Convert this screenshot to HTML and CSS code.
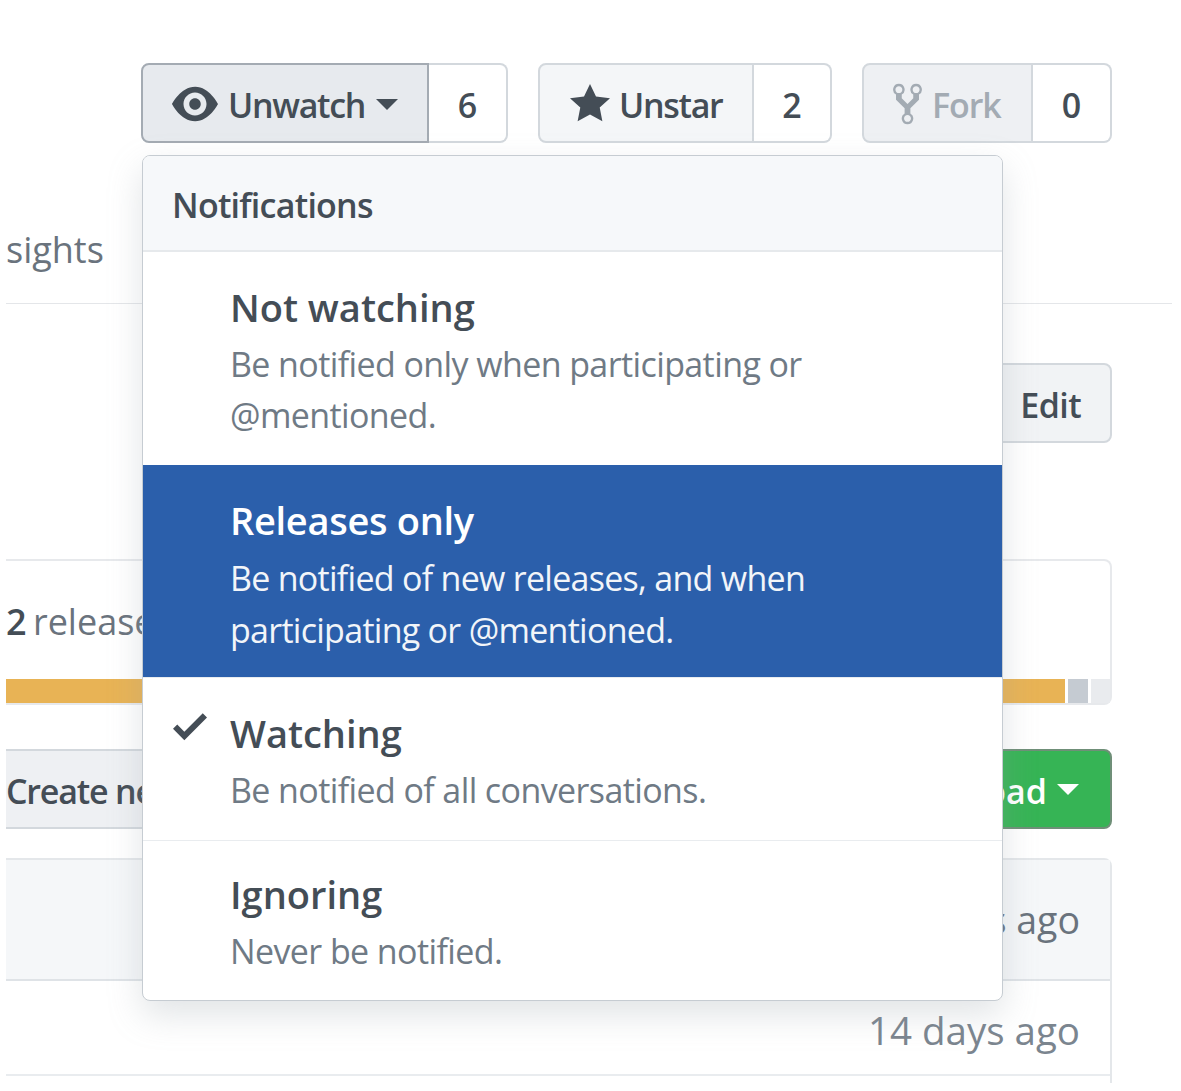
FILE: index.html
```html
<!DOCTYPE html>
<html lang="en">
<head>
    <meta charset="UTF-8">
    <meta name="viewport" content="width=device-width, initial-scale=1.0">
    <title>Notifications menu</title>
    <link rel="stylesheet" href="styles.css">
</head>
<body>
    <div class="page">
        <div class="actions">
            <div class="btn-group watch-group">
                <div class="btn btn-active">
                    <svg class="icon-eye" viewBox="0 0 16 16"><path fill-rule="evenodd" d="M8.06 2C3 2 0 8 0 8s3 6 8.06 6C13 14 16 8 16 8s-3-6-7.94-6zM8 12c-2.2 0-4-1.78-4-4 0-2.2 1.8-4 4-4 2.22 0 4 1.8 4 4 0 2.22-1.78 4-4 4zm2-4c0 1.11-.89 2-2 2-1.11 0-2-.89-2-2 0-1.11.89-2 2-2 1.11 0 2 .89 2 2z"/></svg>
                    <span>Unwatch</span>
                    <i class="caret"></i>
                </div>
                <div class="count">6</div>
            </div>
            <div class="btn-group star-group">
                <div class="btn">
                    <svg class="icon-star" viewBox="0 0 14 16"><path d="M14 6l-4.9-.64L7 1 4.9 5.36 0 6l3.6 3.26L2.67 14 7 11.67 11.33 14l-.93-4.74L14 6z"/></svg>
                    <span>Unstar</span>
                </div>
                <div class="count">2</div>
            </div>
            <div class="btn-group fork-group">
                <div class="btn btn-disabled">
                    <svg class="icon-fork" viewBox="0 0 10 16"><path fill-rule="evenodd" d="M8 1a1.993 1.993 0 0 0-1 3.72V6L5 8 3 6V4.72A1.993 1.993 0 0 0 2 1a1.993 1.993 0 0 0-1 3.72V6.5l3 3v1.78A1.993 1.993 0 0 0 5 15a1.993 1.993 0 0 0 1-3.72V9.5l3-3V4.72A1.993 1.993 0 0 0 8 1zM2 4.2C1.34 4.2.8 3.65.8 3c0-.65.55-1.2 1.2-1.2.65 0 1.2.55 1.2 1.2 0 .65-.55 1.2-1.2 1.2zm3 10c-.66 0-1.2-.55-1.2-1.2 0-.65.55-1.2 1.2-1.2.65 0 1.2.55 1.2 1.2 0 .65-.55 1.2-1.2 1.2zm3-10c-.66 0-1.2-.55-1.2-1.2 0-.65.55-1.2 1.2-1.2.65 0 1.2.55 1.2 1.2 0 .65-.55 1.2-1.2 1.2z"/></svg>
                    <span>Fork</span>
                </div>
                <div class="count">0</div>
            </div>
        </div>

        <div class="tabs">sights</div>

        <div class="edit-row">
            <div class="edit-btn">Edit</div>
        </div>

        <div class="summary">
            <div class="summary-text"><b>2</b> releases</div>
            <div class="lang-bar">
                <div class="lang lang-main"></div>
                <div class="lang lang-second"></div>
                <div class="lang lang-third"></div>
            </div>
        </div>

        <div class="create-row">
            <div class="create-btn">Create new file</div>
            <div class="clone-btn">Clone or download <i class="caret caret-white"></i></div>
        </div>

        <div class="files">
            <div class="files-head">2 days ago</div>
            <div class="files-row">14 days ago</div>
        </div>

        <div class="menu">
            <div class="menu-header">Notifications</div>
            <div class="menu-item">
                <div class="menu-check"></div>
                <div>
                    <div class="menu-title">Not watching</div>
                    <div class="menu-desc">Be notified only when participating or<br>@mentioned.</div>
                </div>
            </div>
            <div class="menu-item selected">
                <div class="menu-check"></div>
                <div>
                    <div class="menu-title">Releases only</div>
                    <div class="menu-desc">Be notified of new releases, and when<br>participating or @mentioned.</div>
                </div>
            </div>
            <div class="menu-item">
                <div class="menu-check">
                    <svg class="icon-check" viewBox="0 0 12 16"><path d="M12 5l-8 8-4-4 1.5-1.5L4 10l6.5-6.5L12 5z"/></svg>
                </div>
                <div>
                    <div class="menu-title">Watching</div>
                    <div class="menu-desc">Be notified of all conversations.</div>
                </div>
            </div>
            <div class="menu-item last">
                <div class="menu-check"></div>
                <div>
                    <div class="menu-title">Ignoring</div>
                    <div class="menu-desc">Never be notified.</div>
                </div>
            </div>
        </div>
    </div>
</body>
</html>
```

FILE: styles.css
```css
* { box-sizing: border-box; }
html, body { margin: 0; height: 100%; overflow: hidden; }
body { background: #fff; color: #444d56; font-family: "Open Sans", "Noto Sans", sans-serif; font-size: 34px; }

.page { position: relative; width: 1166px; height: 1083px; margin-left: 6px; overflow: hidden; }

/* repo action buttons */
.actions { display: flex; justify-content: flex-end; gap: 30px; height: 80px; margin: 63px 60px 0 0; }
.btn-group { display: flex; height: 80px; }
.btn { display: flex; align-items: center; height: 100%; padding-top: 3px; border: 2px solid #d3d8dd; border-radius: 8px 0 0 8px; background: #f4f6f8; font-weight: 600; letter-spacing: -1.3px; }
.btn-active { background: #e7eaee; border-color: #a4abb3; }
.btn-disabled { background: #eef0f3; color: #a3abb3; letter-spacing: -1.1px; }
.btn-disabled svg { fill: #a3abb3; }
.count { display: flex; align-items: center; justify-content: center; height: 100%; padding-top: 3px; border: 2px solid #d3d8dd; border-left: 0; border-radius: 0 8px 8px 0; background: #fff; font-weight: 600; }
.watch-group .btn { width: 288px; padding-left: 29px; }
.watch-group .count { width: 79px; }
.star-group .btn { width: 216px; padding-left: 30px; }
.star-group .count { width: 78px; }
.fork-group .btn { width: 171px; padding-left: 29px; }
.fork-group .count { width: 79px; }

.icon-eye { width: 46px; height: 46px; margin-top: -2px; margin-right: 10px; fill: #444d56; }
.icon-star { width: 40px; height: 46px; margin-top: -2px; margin-right: 9px; fill: #444d56; }
.icon-fork { width: 29px; height: 46px; margin-top: -2px; margin-right: 10px; }
.icon-check { display: block; width: 34px; height: 46px; margin-top: -4px; fill: #444d56; }

.caret { display: inline-block; width: 0; height: 0; margin-left: 11px; margin-top: -1px; border: 11px solid transparent; border-top-color: #444d56; border-bottom: 0; }
.caret-white { border-top-color: #fff; margin-left: 10px; margin-top: -3px; }

.tabs { height: 161px; padding-top: 87px; border-bottom: 1px solid #e4e6e9; line-height: 40px; font-size: 36px; color: #6a737d; }

.edit-row { display: flex; justify-content: flex-end; margin: 59px 60px 0 0; }
.edit-btn { display: flex; align-items: center; justify-content: flex-end; width: 140px; height: 80px; padding: 3px 29px 0 0; border: 2px solid #d3d8dd; border-radius: 0 8px 8px 0; background: #f1f3f5; font-weight: 600; letter-spacing: -0.6px; }

.summary { display: flex; flex-direction: column; justify-content: space-between; height: 146px; margin: 116px 60px 0 0; border: 2px solid #e7e9ec; border-left: 0; border-radius: 0 8px 8px 0; }
.summary-text { padding-top: 38px; line-height: 46px; font-size: 36px; word-spacing: -3px; color: #6a737d; }
.summary-text b { color: #444d56; font-weight: 600; }
.lang-bar { display: flex; height: 24px; }
.lang-main { width: 1059px; background: #e8b355; }
.lang-second { width: 20px; margin-left: 3px; background: #c5cbd2; }
.lang-third { flex: 1; margin-left: 3px; background: #e9ebee; }

.create-row { display: flex; justify-content: space-between; height: 80px; margin: 44px 60px 0 0; font-weight: 600; }
.create-btn { display: flex; align-items: center; width: 400px; padding-top: 3px; border: 2px solid #d3d8dd; border-left: 0; background: #eef0f3; letter-spacing: -1.2px; }
.clone-btn { display: flex; align-items: center; justify-content: flex-end; width: 400px; padding: 3px 31px 0 0; border: 2px solid #6f8f78; border-radius: 8px; background: #36b455; color: #fff; white-space: nowrap; }

.files { height: 240px; margin: 29px 60px 0 0; border: 2px solid #e4e7ea; border-left: 0; border-bottom: 0; border-radius: 0 8px 0 0; font-size: 37.5px; color: #6a737d; }
.files-head { height: 121px; padding: 37px 30px 0 0; border-bottom: 2px solid #dfe3e7; background: #f5f7f9; line-height: 46px; text-align: right; }
.files-row { height: 95px; padding: 26px 30px 0 0; border-bottom: 2px solid #e9ecef; font-size: 38.5px; line-height: 46px; text-align: right; color: #7b858f; }

/* dropdown over the page */
.menu { position: absolute; left: 136px; top: 155px; width: 861px; border: 1px solid #c6ccd2; border-radius: 8px; background: #fff; box-shadow: 0 14px 34px rgba(149, 157, 165, 0.28); overflow: hidden; }
.menu-header { height: 96px; padding-left: 29px; border-bottom: 2px solid #e6e9ec; background: #f6f8fa; line-height: 98px; font-weight: 600; letter-spacing: -0.75px; }
.menu-item { display: flex; padding: 29px 30px 24px 30px; border-top: 1px solid #e9ecef; }
.menu-header + .menu-item { border-top: 0; }
.menu-check { flex: none; width: 57px; }
.menu-title { height: 52px; line-height: 52px; font-size: 38px; font-weight: 600; }
.menu-desc { margin-top: 6px; line-height: 51px; color: #6f7a85; letter-spacing: -0.6px; }
.selected { padding-bottom: 21px; background: #2b5fab; color: #fff; border-top: 0; }
.selected .menu-title { letter-spacing: -0.3px; }
.selected .menu-desc { line-height: 52px; color: #f2f5f9; letter-spacing: -0.72px; }
.last { padding: 27px 30px 23px 30px; }
```
